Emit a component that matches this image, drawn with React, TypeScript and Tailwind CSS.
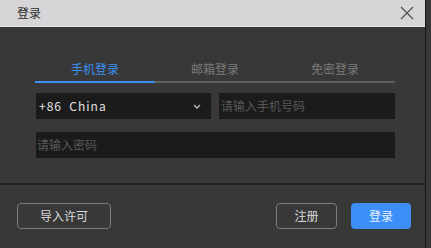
import React from 'react';

const tabs = ['手机登录', '邮箱登录', '免密登录'];

export default function App() {
  return (
    <div
      className="flex w-[431px] h-[248px] bg-[#383838] overflow-hidden"
      style={{ fontFamily: '"Noto Sans CJK SC", "Noto Sans", sans-serif' }}
    >
      <div className="flex flex-col w-[426px] h-full border-r border-[#151515]">
        {/* title bar */}
        <div className="flex items-center justify-between h-[27px] bg-[#d7d5d8] border-b border-[#e9e8ea] pl-[17px] pr-[11px]">
          <span className="text-[12px] leading-none text-[#2c2c2c]">登录</span>
          <svg width="14" height="14" viewBox="0 0 14 14" className="text-[#505050]">
            <path d="M1 1 L13 13 M13 1 L1 13" stroke="currentColor" strokeWidth="1.2" />
          </svg>
        </div>

        {/* body */}
        <div className="flex-1 px-[35px] pt-[34px] border-b-2 border-[#222222]">
          <div className="grid grid-cols-3 w-[360px]">
            {tabs.map((t, i) => (
              <div key={t} className="flex flex-col items-center">
                <span
                  className={`text-[12px] leading-[16px] pb-[4px] ${
                    i === 0 ? 'text-[#3a8ff0]' : 'text-[#7a7a7a]'
                  }`}
                >
                  {t}
                </span>
                <div className={`w-full h-[2px] ${i === 0 ? 'bg-[#3a8ff0]' : 'bg-[#5e5e5e]'}`}></div>
              </div>
            ))}
          </div>

          <div className="flex gap-[8px] mt-[10px] w-[359px] ml-[1px]">
            <div className="flex items-center justify-between w-[175px] h-[26px] bg-[#1b1b1b] pl-[3px] pr-[10px]">
              <span className="text-[12px] text-[#e2e2e2] tracking-[1px] whitespace-pre">+86  China</span>
              <svg width="8" height="5" viewBox="0 0 8 5">
                <path d="M1 1 L4 4 L7 1" stroke="#bdbdbd" strokeWidth="1.3" fill="none" />
              </svg>
            </div>
            <div className="flex items-center flex-1 h-[26px] bg-[#1b1b1b] pl-[2px]">
              <span className="text-[12px] text-[#585858]">请输入手机号码</span>
            </div>
          </div>

          <div className="flex items-center w-[359px] ml-[1px] h-[26px] mt-[13px] bg-[#1b1b1b] pl-[1px]">
            <span className="text-[12px] text-[#585858]">请输入密码</span>
          </div>
        </div>

        {/* footer */}
        <div className="flex items-start justify-between h-[63px] pt-[18px] pl-[17px] pr-[14px]">
          <button className="w-[94px] h-[26px] rounded-[4px] border border-[#7c7c7c] text-[12px] text-[#d8d8d8]">
            导入许可
          </button>
          <div className="flex gap-[14px]">
            <button className="w-[61px] h-[26px] rounded-[4px] border border-[#7c7c7c] text-[12px] text-[#d8d8d8]">
              注册
            </button>
            <button className="w-[60px] h-[26px] rounded-[4px] bg-[#3b8ff6] text-[12px] text-[#eaf2ff]">
              登录
            </button>
          </div>
        </div>
      </div>
      <div className="flex-1 bg-[#383838]"></div>
    </div>
  );
}
